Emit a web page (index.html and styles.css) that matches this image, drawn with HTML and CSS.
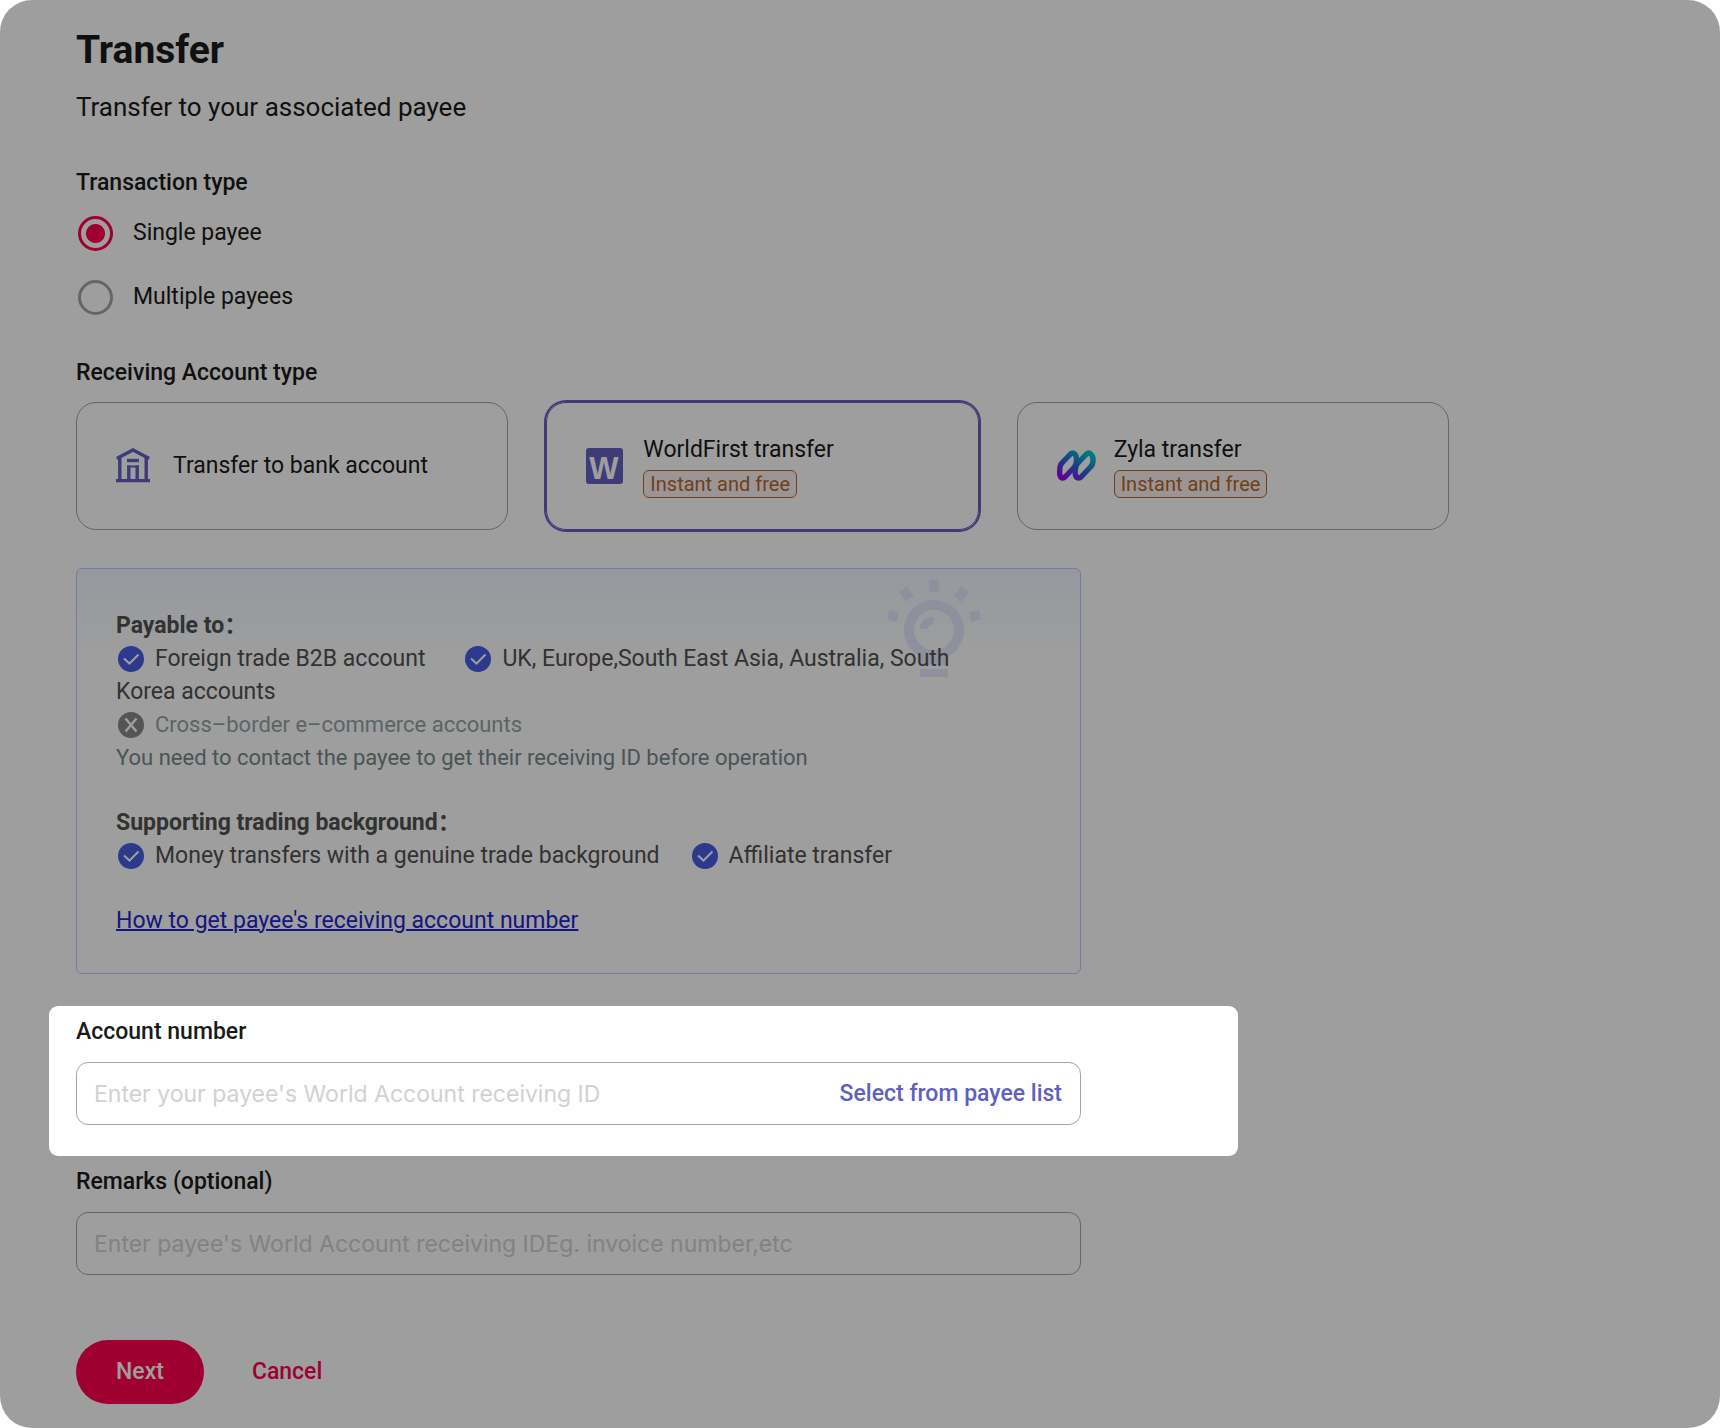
FILE: index.html
```html
<!DOCTYPE html>
<html lang="en">
<head>
<meta charset="utf-8">
<meta name="viewport" content="width=device-width, initial-scale=1">
<title>Transfer</title>
<link rel="stylesheet" href="styles.css">
</head>
<body>
<svg class="sprite" aria-hidden="true">
  <symbol id="icon-check" viewBox="0 0 26 26">
    <circle cx="13" cy="13" r="13" fill="#495ce2"/>
    <path d="M6 12.5L11.5 17.5L20.5 8.5" fill="none" stroke="#fff" stroke-width="2"/>
  </symbol>
  <symbol id="icon-cross" viewBox="0 0 26 26">
    <circle cx="13" cy="13" r="13" fill="#8a8a8a"/>
    <path d="M7.5 6.5L18.5 19.5M18.5 6.5L7.5 19.5" fill="none" stroke="#fff" stroke-width="2.4"/>
  </symbol>
</svg>
<main class="page">
  <form class="form">
    <h1 class="title">Transfer</h1>
    <p class="subtitle">Transfer to your associated payee</p>

    <fieldset class="group">
      <legend class="label">Transaction type</legend>
      <div class="radios">
        <label class="radio"><input class="radio-dot" type="radio" name="type" checked>Single payee</label>
        <label class="radio"><input class="radio-dot" type="radio" name="type">Multiple payees</label>
      </div>
    </fieldset>

    <fieldset class="group">
      <legend class="label">Receiving Account type</legend>
      <div class="cards">
        <label class="card">
          <input class="card-input" type="radio" name="account">
          <svg class="card-icon" viewBox="0 0 40 40" aria-hidden="true">
            <g fill="none" stroke="#6560c0" stroke-width="3.4">
              <path d="M0.8 12.500L17 4L33.2 12.500"/>
              <path d="M3.800 11V34M30.200 11V34"/>
              <path d="M0 34.600H34"/>
              <path d="M11 14.500H23"/>
              <path d="M12.800 34V19.500M21.200 34V19.500"/>
              <path d="M11 20.500H23" stroke-width="2"/>
            </g>
          </svg>
          <span class="card-text">Transfer to bank account</span>
        </label>
        <label class="card">
          <input class="card-input" type="radio" name="account" checked>
          <svg class="card-icon" viewBox="0 0 40 40" aria-hidden="true">
            <rect x="0" y="2" width="37" height="36" rx="3" fill="#6560c0"/>
            <text class="logo-letter" x="18" y="33" text-anchor="middle">W</text>
          </svg>
          <span class="card-text">WorldFirst transfer<span class="badge">Instant and free</span></span>
        </label>
        <label class="card">
          <input class="card-input" type="radio" name="account">
          <svg class="card-icon" viewBox="1 0 40 40" aria-hidden="true">
            <defs>
              <linearGradient id="zyla" gradientUnits="userSpaceOnUse" x1="10" y1="35" x2="27" y2="5">
                <stop offset="0" stop-color="#9a00f0"/>
                <stop offset=".5" stop-color="#2f62d8"/>
                <stop offset="1" stop-color="#00c4c8"/>
              </linearGradient>
            </defs>
            <g fill="none" stroke="url(#zyla)" stroke-width="5.4" stroke-linejoin="round">
              <path d="M14.500 8L5 18Q3.700 21 3.700 25V27.500Q4 31.500 6.500 32Q8 32 9.500 30.500L18.500 21Q20.500 18.500 20.500 15V12Q20 8 17 7Q15.500 7 14.500 8Z"/>
              <path d="M30.500 8L21 18Q19.200 21 19.200 25V27.500Q19.500 31.500 22.500 32Q24 32 25.500 30.500L34.500 21Q37 18.500 37 15V12Q36 8 33 7Q31.500 7 30.500 8Z"/>
            </g>
          </svg>
          <span class="card-text">Zyla transfer<span class="badge">Instant and free</span></span>
        </label>
      </div>
    </fieldset>

    <section class="notice">
      <svg class="bulb" viewBox="0 0 94 98" aria-hidden="true">
        <g fill="#e5e8ff">
          <rect x="42" y="0" width="10" height="12"/>
          <rect x="-5" y="-6" width="10" height="12" transform="translate(19.500 14) rotate(-38)"/>
          <rect x="-5" y="-6" width="10" height="12" transform="translate(74.500 14) rotate(38)"/>
          <rect x="-5" y="-5" width="10" height="10" transform="translate(6 36) rotate(12)"/>
          <rect x="-5" y="-5" width="10" height="10" transform="translate(88 36) rotate(-12)"/>
          <path d="M33 72H61V85H33Z"/>
          <rect x="33" y="89" width="28" height="8"/>
          <path d="M33 49Q34 37 46.500 36.500V44Q41.500 44.500 41 49Z"/>
        </g>
        <circle cx="47" cy="50" r="25" fill="none" stroke="#e5e8ff" stroke-width="10"/>
      </svg>
      <h2 class="notice-title">Payable to：</h2>
      <p class="notice-line"><span class="item"><svg class="mark" aria-hidden="true"><use href="#icon-check"/></svg>Foreign trade B2B account</span><svg class="mark" aria-hidden="true"><use href="#icon-check"/></svg>UK, Europe,South East Asia, Australia, South Korea accounts</p>
      <p class="notice-line muted"><svg class="mark" aria-hidden="true"><use href="#icon-cross"/></svg>Cross–border e–commerce accounts</p>
      <p class="notice-line hint">You need to contact the payee to get their receiving ID before operation</p>
      <h2 class="notice-title spaced">Supporting trading background：</h2>
      <p class="notice-line"><span class="item item-near"><svg class="mark" aria-hidden="true"><use href="#icon-check"/></svg>Money transfers with a genuine trade background</span><svg class="mark" aria-hidden="true"><use href="#icon-check"/></svg>Affiliate transfer</p>
      <p class="notice-line spaced"><a class="link" href="#">How to get payee's receiving account number</a></p>
    </section>

    <div class="spotlight">
      <label class="label" for="account-number">Account number</label>
      <div class="field">
        <input class="input" id="account-number" type="text" placeholder="Enter your payee's World Account receiving ID">
        <button class="pick" type="button">Select from payee list</button>
      </div>
    </div>

    <div class="remarks">
      <label class="label" for="remarks">Remarks (optional)</label>
      <div class="field">
        <input class="input" id="remarks" type="text" placeholder="Enter payee's World Account receiving IDEg. invoice number,etc">
      </div>
    </div>

    <div class="actions">
      <button class="next" type="submit">Next</button>
      <button class="cancel" type="button">Cancel</button>
    </div>
  </form>
</main>
</body>
</html>
```
FILE: styles.css
```css
* {
  box-sizing: border-box;
}

body {
  margin: 0;
  background: #fff;
  color: #1a1a1a;
  font-family: Roboto, "Noto Sans CJK SC", sans-serif;
  font-size: 23px;
  line-height: 32px;
}

h1, h2, p, fieldset, legend {
  margin: 0;
  padding: 0;
  border: 0;
  min-width: 0;
}

button, input {
  font: inherit;
  margin: 0;
}

.sprite {
  position: absolute;
  width: 0;
  height: 0;
}

.page {
  min-height: 100vh;
  padding: 24px 76px;
  border-radius: 32px;
  overflow: hidden;
}

.title {
  font-size: 39px;
  line-height: 52px;
  font-weight: 700;
}

.subtitle {
  margin-top: 13px;
  font-size: 26px;
  line-height: 36px;
}

.group {
  margin-top: 42px;
}

.label {
  display: block;
  font-weight: 500;
}

.radios {
  display: grid;
  gap: 28px;
  margin-top: 16px;
}

.radio {
  display: flex;
  align-items: center;
  gap: 20px;
  height: 36px;
  padding-left: 2px;
}

.radio-dot {
  appearance: none;
  width: 35px;
  height: 35px;
  border: 3px solid #a5a5a5;
  border-radius: 50%;
}

.radio-dot:checked {
  border-color: #ff004d;
  background: radial-gradient(circle, #ff004d 9px, transparent 10px);
}

.cards {
  display: grid;
  grid-template-columns: repeat(3, 1fr);
  gap: 38px;
  max-width: 1373px;
  margin-top: 13px;
}

.card {
  position: relative;
  display: flex;
  align-items: center;
  gap: 17px;
  min-height: 128px;
  padding: 0 39px;
  border: 1px solid #a5a5a5;
  border-radius: 20px;
}

.card:has(:checked) {
  border-color: #6560c0;
  box-shadow: 0 0 0 2px #6560c0;
}

.card-input {
  position: absolute;
  opacity: 0;
}

.card-icon {
  flex: none;
  width: 40px;
  height: 40px;
}

.logo-letter {
  font: 700 31px "Liberation Sans", sans-serif;
  fill: #fff;
}

.card-text {
  display: grid;
  justify-items: start;
  gap: 4px;
}

.badge {
  padding: 0 6px;
  border: 1px solid #b06a2c;
  border-radius: 6px;
  background: #fcf1f0;
  color: #b06a2c;
  font-size: 20px;
  line-height: 26px;
}

.notice {
  position: relative;
  max-width: 1005px;
  margin-top: 38px;
  padding: 40px 120px 36px 39px;
  border: 1px solid #b8caff;
  border-radius: 6px;
  background: linear-gradient(#f2f6ff, #fff 90px);
  color: #525252;
  line-height: 33px;
}

.bulb {
  position: absolute;
  top: 11px;
  right: 99px;
  width: 94px;
  height: 98px;
}

.notice-title {
  position: relative;
  font-size: 23px;
  line-height: 33px;
  font-weight: 700;
}

.notice-line {
  position: relative;
}

.spaced {
  margin-top: 32px;
}

.item {
  margin-right: 38px;
}

.item-near {
  margin-right: 30px;
}

.mark {
  width: 26px;
  height: 26px;
  margin: 0 11px 0 2px;
  vertical-align: -6px;
}

.muted {
  color: #94a4a4;
  font-size: 22px;
}

.hint {
  color: #788989;
  font-size: 22px;
}

.link {
  color: #2424cd;
  text-decoration-thickness: 2px;
}

/* Guided-tour step: everything outside this box is dimmed. */
.spotlight {
  position: relative;
  z-index: 1;
  max-width: 1189px;
  margin: 32px 0 0 -27px;
  padding: 10px 27px 31px;
  border-radius: 9px;
  background: #fff;
  box-shadow: 0 0 0 4000px rgba(0, 0, 0, .38);
}

.field {
  display: flex;
  align-items: center;
  max-width: 1005px;
  height: 63px;
  margin-top: 14px;
  padding: 0 18px 0 17px;
  border: 1px solid #a5a5a5;
  border-radius: 12px;
}

.input {
  flex: 1;
  min-width: 0;
  padding: 0;
  border: 0;
  outline: 0;
  background: none;
  font-family: Inter, sans-serif;
  font-size: 23px;
}

.input::placeholder {
  color: #d2d2d2;
  opacity: 1;
}

.pick, .cancel {
  padding: 0;
  border: 0;
  background: none;
  color: #6060c0;
  font-weight: 500;
}

.remarks {
  margin-top: 10px;
}

.actions {
  display: flex;
  align-items: center;
  gap: 48px;
  margin-top: 65px;
}

.next {
  height: 64px;
  padding: 0 40px;
  border: 0;
  border-radius: 32px;
  background: #ff004d;
  color: #fff;
  font-weight: 500;
}

.cancel {
  color: #ff004d;
}
```
